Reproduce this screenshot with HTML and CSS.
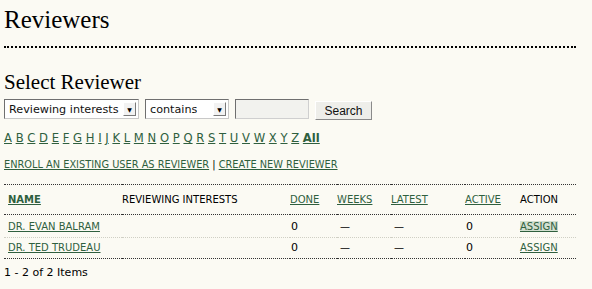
FILE: index.html
```html
<!DOCTYPE html>
<html>
<head>
<meta charset="utf-8">
<link rel="stylesheet" href="styles.css">
</head>
<body>
<div class="page">
  <h2 class="title">Reviewers</h2>
  <div class="sep"></div>
  <h3 class="subtitle">Select Reviewer</h3>
  <form class="search">
    <div class="sel sel-field"><span class="sel-text">Reviewing interests</span><span class="arrow">▼</span></div>
    <div class="sel sel-match"><span class="sel-text">contains</span><span class="arrow">▼</span></div>
    <div class="textbox"></div>
    <button type="button" class="btn">Search</button>
  </form>
  <div class="alpha">
    <a href="#">A</a> <a href="#">B</a> <a href="#">C</a> <a href="#">D</a> <a href="#">E</a> <a href="#">F</a> <a href="#">G</a> <a href="#">H</a> <a href="#">I</a> <a href="#">J</a> <a href="#">K</a> <a href="#">L</a> <a href="#">M</a> <a href="#">N</a> <a href="#">O</a> <a href="#">P</a> <a href="#">Q</a> <a href="#">R</a> <a href="#">S</a> <a href="#">T</a> <a href="#">U</a> <a href="#">V</a> <a href="#">W</a> <a href="#">X</a> <a href="#">Y</a> <a href="#">Z</a> <a href="#" class="all">All</a>
  </div>
  <div class="actions">
    <a href="#">ENROLL AN EXISTING USER AS REVIEWER</a> | <a href="#">CREATE NEW REVIEWER</a>
  </div>
  <table class="list">
    <thead>
      <tr>
        <th class="c-name"><a href="#" class="sorted">NAME</a></th>
        <th class="c-int">REVIEWING INTERESTS</th>
        <th class="c-done"><a href="#">DONE</a></th>
        <th class="c-weeks"><a href="#">WEEKS</a></th>
        <th class="c-latest"><a href="#">LATEST</a></th>
        <th class="c-active"><a href="#">ACTIVE</a></th>
        <th class="c-action">ACTION</th>
      </tr>
    </thead>
    <tbody>
      <tr class="row first">
        <td><a href="#">DR. EVAN BALRAM</a></td>
        <td></td>
        <td>0</td>
        <td>—</td>
        <td>—</td>
        <td>0</td>
        <td><a href="#" class="hl">ASSIGN</a></td>
      </tr>
      <tr class="row last">
        <td><a href="#">DR. TED TRUDEAU</a></td>
        <td></td>
        <td>0</td>
        <td>—</td>
        <td>—</td>
        <td>0</td>
        <td><a href="#">ASSIGN</a></td>
      </tr>
    </tbody>
  </table>
  <div class="count">1 - 2 of 2 Items</div>
</div>
</body>
</html>
```
FILE: styles.css
```css
html, body {
  margin: 0;
  padding: 0;
  background: #fbfaf3;
}
.page {
  width: 572px;
  padding: 0 0 0 4px;
  font-family: "DejaVu Sans", Verdana, sans-serif;
  font-size: 10px;
  color: #000;
}
a {
  color: #2f5f3e;
  text-decoration: underline;
}
.title {
  font-family: "Liberation Serif", Georgia, serif;
  font-weight: normal;
  font-size: 25px;
  margin: 0;
  padding-top: 7px;
  line-height: 26px;
  height: 26px;
}
.sep {
  margin-top: 13px;
  border-bottom: 2px dotted #000;
}
.subtitle {
  font-family: "Liberation Serif", Georgia, serif;
  font-weight: normal;
  font-size: 21px;
  line-height: 22px;
  margin: 23px 0 0 0;
}
.search {
  display: flex;
  gap: 6px;
  margin-top: 6px;
  height: 21px;
  align-items: flex-start;
}
.sel {
  box-sizing: border-box;
  height: 20px;
  background: #ffffff;
  border: 1px solid;
  border-color: #6f6f6f #c8c8c8 #c8c8c8 #6f6f6f;
  font-size: 11.2px;
  white-space: nowrap;
  display: flex;
  align-items: center;
  justify-content: space-between;
  padding: 0 2px 0 4px;
  color: #111;
}
.sel-text {
  overflow: hidden;
}
.sel-field { width: 135px; }
.sel-match { width: 84px; }
.arrow {
  flex-shrink: 0;
  box-sizing: border-box;
  width: 13px;
  height: 14px;
  font-size: 6px;
  display: flex;
  align-items: center;
  justify-content: center;
  background: #f2f2f2;
  border: 1px solid;
  border-color: #fff #7a7a7a #7a7a7a #fff;
  color: #000;
}
.textbox {
  box-sizing: border-box;
  width: 74px;
  height: 20px;
  background: #f2f2ee;
  border: 1px solid;
  border-color: #6f6f6f #cfcfcf #cfcfcf #6f6f6f;
}
.btn {
  box-sizing: border-box;
  width: 57px;
  height: 19px;
  margin-top: 2px;
  font-family: "Liberation Sans", Arial, sans-serif;
  font-size: 12px;
  padding: 0;
  background: #eeeeea;
  border: 1px solid;
  border-color: #ffffff #8a8a8a #8a8a8a #ffffff;
  color: #111;
}
.alpha {
  margin-top: 11px;
  font-size: 11.6px;
  line-height: 14px;
}
.alpha .all {
  font-weight: bold;
}
.actions {
  margin-top: 13px;
  font-size: 9.8px;
  line-height: 14px;
}
.list {
  width: 572px;
  margin-top: 12px;
  border-collapse: collapse;
  border-top: 1px dotted #333;
  border-bottom: 1px dotted #333;
  font-size: 10px;
}
.list th {
  font-weight: normal;
  text-align: left;
  padding: 8px 0 7px 0;
  line-height: 14px;
  border-bottom: 1px dotted #333;
}
.list th a.sorted {
  font-weight: bold;
}
.c-name { width: 114px; padding-left: 4px !important; }
.c-int { width: 168px; }
.c-done { width: 47px; }
.c-weeks { width: 54px; }
.c-latest { width: 74px; }
.c-active { width: 55px; }
.list td {
  line-height: 14px;
}
.row.first td {
  padding: 5px 0 3px 0;
  border-bottom: 1px dotted #cfcfc4;
}
.row.last td {
  padding: 3px 0 3px 0;
}
.list td:first-child {
  padding-left: 4px;
}
.list td:nth-child(3), .list td:nth-child(6) {
  padding-left: 1px;
  font-size: 11px;
}
.list td:nth-child(4), .list td:nth-child(5) {
  padding-left: 3px;
}
a.hl {
  background: #d2e0d0;
}
.count {
  margin-top: 7px;
  font-size: 11px;
  line-height: 14px;
}
```
